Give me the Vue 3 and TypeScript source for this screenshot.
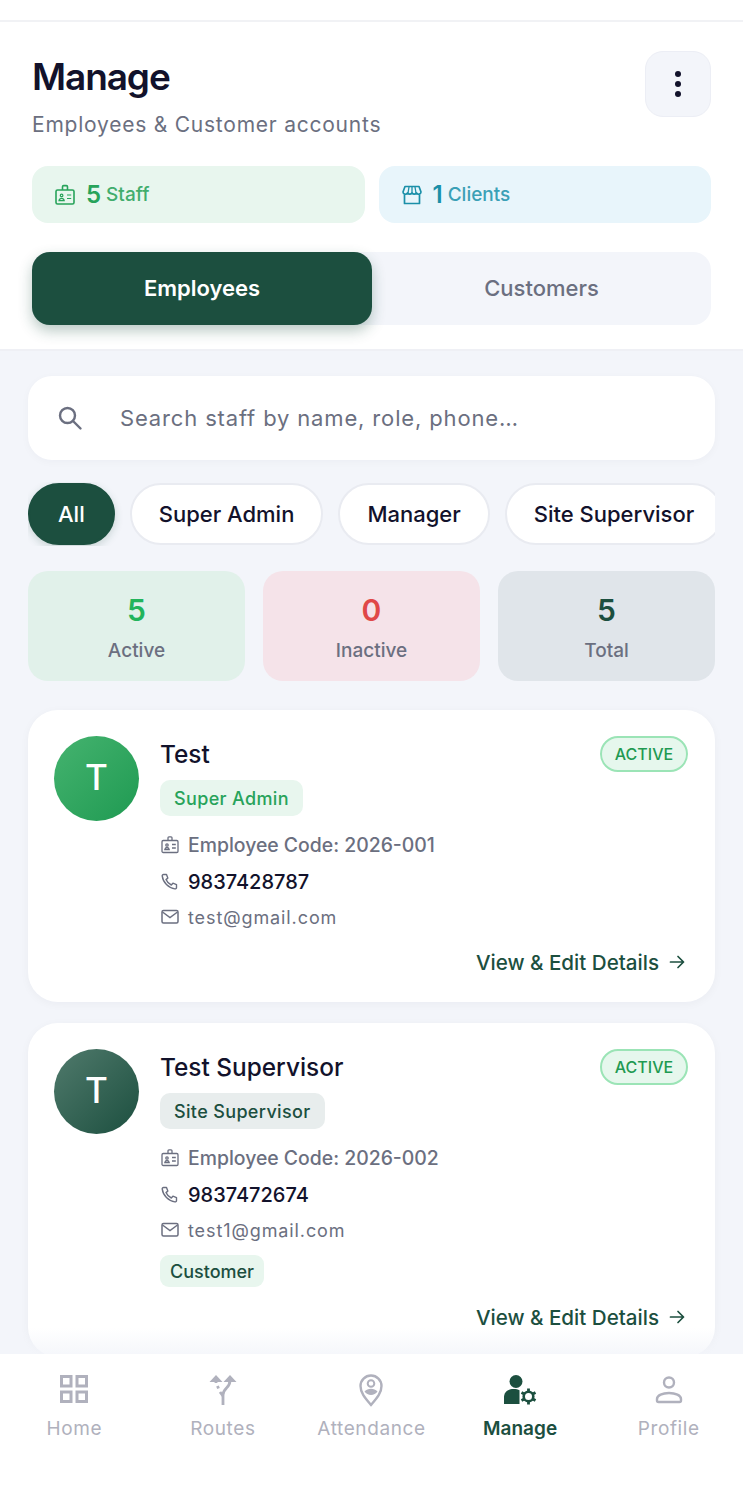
<script setup lang="ts">
type Employee = {
  name: string;
  role: string;
  code: string;
  phone: string;
  email: string;
  tone: string;
  customer?: boolean;
};

const filters = ["All", "Super Admin", "Manager", "Site Supervisor"];

const stats = [
  { label: "Active", value: 5, tone: "green" },
  { label: "Inactive", value: 0, tone: "red" },
  { label: "Total", value: 5, tone: "dark" },
];

const employees: Employee[] = [
  {
    name: "Test",
    role: "Super Admin",
    code: "2026-001",
    phone: "9837428787",
    email: "test@gmail.com",
    tone: "green",
  },
  {
    name: "Test Supervisor",
    role: "Site Supervisor",
    code: "2026-002",
    phone: "9837472674",
    email: "test1@gmail.com",
    tone: "dark",
    customer: true,
  },
];

const navItems = ["Home", "Routes", "Attendance", "Manage", "Profile"];
</script>

<template>
  <div class="screen">
    <div class="status-bar"></div>

    <header class="header">
      <div class="title-row">
        <div>
          <h1>Manage</h1>
          <p class="subtitle">Employees &amp; Customer accounts</p>
        </div>
        <button class="more-btn" aria-label="More">
          <span></span><span></span><span></span>
        </button>
      </div>

      <div class="counts">
        <div class="count count--staff">
          <svg width="22" height="22" viewBox="0 0 22 22" fill="none" stroke="currentColor" stroke-width="1.6">
            <rect x="2" y="6" width="18" height="14" rx="1.5" />
            <path d="M8.5 6V2.8a1.2 1.2 0 0 1 1.2-1.2h2.6a1.2 1.2 0 0 1 1.2 1.2V6" />
            <circle cx="7.6" cy="11.4" r="1.3" stroke-width="1.2" />
            <path d="M5 16.6c.3-1.6 1.3-2.3 2.6-2.3s2.3.7 2.6 2.3zM13 11h4.2M13 14.5h4.2" stroke-width="1.2" />
          </svg>
          <b>5</b><span>Staff</span>
        </div>
        <div class="count count--clients">
          <svg width="22" height="22" viewBox="0 0 22 22" fill="none" stroke="currentColor" stroke-width="1.7" stroke-linejoin="round">
            <path d="M4 2.5h14l2 5.5a2.4 2.4 0 0 1-4.5 1 2.7 2.7 0 0 1-4.5 0 2.7 2.7 0 0 1-4.5 0A2.4 2.4 0 0 1 2 8z" />
            <path d="M8 3l-1 6M14 3l1 6M11 3v6" stroke-width="1.3" />
            <path d="M3.5 10.5v9h15v-9" />
          </svg>
          <b>1</b><span>Clients</span>
        </div>
      </div>

      <div class="tabs">
        <div class="tab tab--active">Employees</div>
        <div class="tab">Customers</div>
      </div>
    </header>

    <main class="content">
      <div class="search">
        <svg width="28" height="28" viewBox="0 0 28 28" fill="none" stroke="#6b6f80" stroke-width="2.4" stroke-linecap="round">
          <circle cx="11.5" cy="11.5" r="7.5" />
          <path d="M17 17l7.5 7.5" />
        </svg>
        <span>Search staff by name, role, phone…</span>
      </div>

      <div class="filters">
        <div
          v-for="(filter, i) in filters"
          :key="filter"
          class="filter"
          :class="{ 'filter--active': i === 0 }"
        >
          {{ filter }}
        </div>
      </div>

      <div class="stats">
        <div v-for="stat in stats" :key="stat.label" class="stat" :class="`stat--${stat.tone}`">
          <b>{{ stat.value }}</b>
          <span>{{ stat.label }}</span>
        </div>
      </div>

      <article v-for="emp in employees" :key="emp.code" class="card">
        <div class="avatar" :class="`avatar--${emp.tone}`">T</div>
        <div class="card__body">
          <div class="card__top">
            <h2>{{ emp.name }}</h2>
            <span class="active-pill">ACTIVE</span>
          </div>
          <span class="role" :class="`role--${emp.tone}`">{{ emp.role }}</span>

          <div class="line line--code">
            <svg width="20" height="20" viewBox="0 0 20 20" fill="none" stroke="#6b6f80" stroke-width="1.3">
              <rect x="2" y="5.5" width="16" height="12" rx="1.2" />
              <path d="M8 5.5V2.8a1 1 0 0 1 1-1h2a1 1 0 0 1 1 1v2.7" />
              <circle cx="7" cy="10" r="1.2" />
              <path d="M4.8 14.5c.2-1.400 1.100-2 2.200-2s2 .6 2.200 2zM12 9.500h3.800M12 13h3.800" />
            </svg>
            <span>Employee Code: {{ emp.code }}</span>
          </div>
          <div class="line line--phone">
            <svg width="20" height="20" viewBox="0 0 20 20" fill="none" stroke="#6b6f80" stroke-width="1.4" stroke-linejoin="round">
              <path d="M3.5 2.5h3l1.3 3.6-1.800 1.500c.9 2.300 2.800 4.200 5.300 5.400l1.600-1.800 3.600 1.400v2.800c0 .9-.7 1.600-1.600 1.500C8.500 16 3 10.500 2.200 3.900c-.1-.8.5-1.400 1.300-1.400z" />
            </svg>
            <span>{{ emp.phone }}</span>
          </div>
          <div class="line line--mail">
            <svg width="20" height="20" viewBox="0 0 20 20" fill="none" stroke="#6b6f80" stroke-width="1.5">
              <rect x="2" y="3.5" width="16" height="12.5" rx="1.5" />
              <path d="M2.5 5l7.5 5.5L17.5 5" />
            </svg>
            <span>{{ emp.email }}</span>
          </div>

          <span v-if="emp.customer" class="customer-tag">Customer</span>

          <div class="details">
            <span>View &amp; Edit Details</span>
            <svg width="20" height="20" viewBox="0 0 20 20" fill="none" stroke="#1c4f3f" stroke-width="1.7" stroke-linecap="round" stroke-linejoin="round">
              <path d="M3.5 10h13M11 4.5l5.5 5.5-5.5 5.5" />
            </svg>
          </div>
        </div>
      </article>
      <div class="fade"></div>
    </main>

    <nav class="nav">
      <div v-for="(item, i) in navItems" :key="item" class="nav__item" :class="{ 'nav__item--active': i === 3 }">
        <svg v-if="i === 0" width="34" height="34" viewBox="0 0 34 34" fill="none" stroke="#b0b1bd" stroke-width="3">
          <rect x="4.5" y="3.5" width="9.5" height="9.5" />
          <rect x="20" y="3.5" width="9.5" height="9.5" />
          <rect x="4.5" y="19" width="9.5" height="9.5" />
          <rect x="20" y="19" width="9.5" height="9.5" />
        </svg>
        <svg v-else-if="i === 1" width="34" height="34" viewBox="0 0 34 34" fill="none" stroke="#b0b1bd" stroke-width="2.8">
          <path d="M17 32V22c0-3 1.500-5 3.500-7 2.200-2 3.500-4 3.500-8" />
          <path d="M17 23l-3-4" />
          <path d="M12.500 15.500l-1-2.500M10 10V7" stroke-dasharray="3 2" />
          <path d="M3.500 9l6.500-7 6.500 7zM17.500 9l6.500-7 6.500 7z" fill="#b0b1bd" stroke="none" />
        </svg>
        <svg v-else-if="i === 2" width="34" height="34" viewBox="0 0 34 34" fill="none" stroke="#b0b1bd" stroke-width="2.4">
          <path d="M17 32C11 25 6.500 20 6.500 13a10.500 10.500 0 0 1 21 0C27.500 20 23 25 17 32z" />
          <circle cx="17" cy="10.500" r="3.300" fill="none" stroke-width="2" />
          <path d="M10.500 18.500c1.800-2 4-2.800 6.500-2.800s4.700.8 6.500 2.800C22 20.500 19.500 22 17 22s-5-1.500-6.500-3.500z" fill="#b0b1bd" stroke="none" />
        </svg>
        <svg v-else-if="i === 3" width="34" height="34" viewBox="0 0 34 34" fill="#1c4f3f">
          <circle cx="13" cy="8.500" r="6.500" />
          <path d="M1 31v-7c0-5 4-8 9.500-8 2.500 0 4.500.4 6 1.200V31z" />
          <g fill="none" stroke="#1c4f3f">
            <circle cx="25.500" cy="23.500" r="4.800" stroke-width="2.600" />
            <path d="M25.500 15.500v3M25.500 28.500v3M18.500 19.500l2.700 1.500M29.800 26l2.700 1.500M18.500 27.500l2.700-1.500M29.800 21l2.700-1.500" stroke-width="2.800" />
          </g>
        </svg>
        <svg v-else width="34" height="34" viewBox="0 0 34 34" fill="none" stroke="#b0b1bd" stroke-width="2.4">
          <circle cx="17" cy="9.500" r="5" />
          <path d="M5 27.500v-1.500c0-3.500 5.500-6 12-6s12 2.500 12 6v1.500a1.500 1.500 0 0 1-1.500 1.500h-21A1.500 1.500 0 0 1 5 27.500z" />
        </svg>
        <span>{{ item }}</span>
      </div>
    </nav>
  </div>
</template>

<style>
html,
body {
  margin: 0;
  background: #fff;
}
</style>

<style scoped>
.screen {
  width: 743px;
  height: 1486px;
  display: flex;
  flex-direction: column;
  overflow: hidden;
  font-family: Inter, "Noto Sans", sans-serif;
  color: #12122b;
  background: #f3f5fa;
}
.status-bar {
  height: 20px;
  flex-shrink: 0;
  background: #fff;
  border-bottom: 2px solid #f1f2f5;
}
.header {
  flex-shrink: 0;
  height: 329px;
  box-sizing: border-box;
  padding: 29px 32px 0;
  background: #fff;
  border-bottom: 2px solid #eff0f5;
}
.title-row {
  display: flex;
  justify-content: space-between;
  height: 115px;
}
h1 {
  margin: 0;
  padding-top: 3px;
  font-size: 37px;
  line-height: 46px;
  font-weight: 600;
  letter-spacing: -1.1px;
  color: #12122b;
}
.subtitle {
  margin: 12px 0 0;
  font-size: 21px;
  line-height: 26px;
  letter-spacing: 0.77px;
  color: #6b6f80;
}
.more-btn {
  width: 66px;
  height: 66px;
  padding: 0;
  border: 1px solid #eceef5;
  border-radius: 18px;
  background: #f3f5fa;
  display: flex;
  flex-direction: column;
  align-items: center;
  justify-content: center;
  gap: 4px;
}
.more-btn span {
  width: 6px;
  height: 6px;
  border-radius: 50%;
  background: #12122b;
}
.counts {
  display: flex;
  gap: 14px;
}
.count {
  flex: 1;
  height: 57px;
  box-sizing: border-box;
  padding-left: 22px;
  border-radius: 16px;
  display: flex;
  align-items: center;
  font-size: 19px;
  font-weight: 500;
}
.count svg {
  margin-right: 10px;
}
.count b {
  font-size: 24px;
  font-weight: 600;
  margin-right: 5px;
}
.count--staff {
  background: #e8f6ee;
  color: #27a35a;
}
.count--staff span {
  color: #42ad6d;
}
.count--clients {
  background: #e8f5fb;
  color: #1a8fa8;
}
.count--clients span {
  color: #3aa0b6;
}
.tabs {
  margin-top: 29px;
  height: 73px;
  display: flex;
  border-radius: 18px;
  background: #f3f5fa;
}
.tab {
  flex: 1;
  display: flex;
  align-items: center;
  justify-content: center;
  padding-bottom: 2px;
  box-sizing: border-box;
  font-size: 22px;
  font-weight: 500;
  color: #6b6f80;
}
.tab--active {
  flex: none;
  width: 340px;
  border-radius: 18px;
  background: #1c4f3f;
  color: #fff;
  font-weight: 600;
  box-shadow: 0 6px 14px rgba(28, 79, 63, 0.3);
}
.content {
  position: relative;
  flex: 1;
  min-height: 0;
  overflow: hidden;
  padding: 25px 28px 0;
}
.search {
  height: 84px;
  box-sizing: border-box;
  padding: 0 28px;
  border-radius: 24px;
  background: #fff;
  box-shadow: 0 2px 8px rgba(20, 30, 60, 0.03);
  display: flex;
  align-items: center;
  gap: 36px;
  font-size: 22px;
  letter-spacing: 0.85px;
  color: #6b6f80;
}
.filters {
  margin-top: 22px;
  height: 64px;
  display: flex;
  align-items: center;
  gap: 15px;
  overflow: hidden;
}
.filter {
  flex-shrink: 0;
  height: 62px;
  box-sizing: border-box;
  padding: 0 27px;
  border: 2px solid #e9ebf1;
  border-radius: 31px;
  background: #fff;
  display: flex;
  align-items: center;
  font-size: 22px;
  font-weight: 500;
  color: #12122b;
}
.filter--active {
  padding: 0 28px;
  border-color: #1c4f3f;
  background: #1c4f3f;
  color: #fff;
  box-shadow: 0 3px 8px rgba(28, 79, 63, 0.2);
}
.stats {
  margin-top: 25px;
  display: grid;
  grid-template-columns: repeat(3, 1fr);
  gap: 18px;
}
.stat {
  height: 110px;
  border-radius: 20px;
  display: flex;
  flex-direction: column;
  align-items: center;
  padding-top: 21px;
  box-sizing: border-box;
}
.stat b {
  font-size: 30px;
  line-height: 36px;
  font-weight: 600;
}
.stat span {
  margin-top: 11px;
  font-size: 19px;
  line-height: 24px;
  font-weight: 500;
  color: #6b6f80;
}
.stat--green {
  background: #e1f1ea;
}
.stat--green b {
  color: #22b45c;
}
.stat--red {
  background: #f5e3e9;
}
.stat--red b {
  color: #e04848;
}
.stat--dark {
  background: #e0e5ea;
}
.stat--dark b {
  color: #1c4f3f;
}
.card {
  margin-top: 29px;
  padding: 26px 27px 25px 26px;
  border-radius: 30px;
  background: #fff;
  box-shadow: 0 2px 10px rgba(20, 30, 60, 0.04);
  display: flex;
  gap: 21px;
}
.card + .card {
  margin-top: 21px;
}
.avatar {
  flex-shrink: 0;
  width: 85px;
  height: 85px;
  box-sizing: border-box;
  padding-bottom: 4px;
  border-radius: 50%;
  display: flex;
  align-items: center;
  justify-content: center;
  color: #fff;
  font-size: 35px;
  font-weight: 500;
}
.avatar--green {
  background: linear-gradient(135deg, #45b36f, #1f9a52);
}
.avatar--dark {
  background: linear-gradient(135deg, #507a6c, #1c4f3f);
}
.card__body {
  flex: 1;
  min-width: 0;
}
.card__top {
  display: flex;
  justify-content: space-between;
  align-items: flex-start;
  height: 36px;
}
h2 {
  margin: 0;
  padding-top: 3px;
  font-size: 24.4px;
  line-height: 30px;
  font-weight: 500;
  color: #12122b;
}
.active-pill {
  width: 88px;
  height: 36px;
  box-sizing: border-box;
  border: 2px solid #9be4b6;
  border-radius: 18px;
  background: #e6f7ed;
  display: flex;
  align-items: center;
  justify-content: center;
  font-size: 16px;
  font-weight: 500;
  color: #1f9a52;
}
.role {
  display: inline-block;
  margin-top: 8px;
  height: 36px;
  padding: 0 14px;
  border-radius: 10px;
  font-size: 18px;
  line-height: 37px;
  letter-spacing: 0.35px;
  font-weight: 500;
}
.role--green {
  background: #e8f6ee;
  color: #27a35a;
}
.role--dark {
  background: #e8eded;
  color: #1c4f3f;
}
.line {
  display: flex;
  align-items: center;
  gap: 8px;
  height: 36px;
  font-size: 20px;
  font-weight: 500;
  color: #6b6f80;
}
.role + .line {
  margin-top: 11px;
}
.line--code {
  font-size: 19.4px;
}
.line--phone {
  color: #12122b;
  padding-top: 2px;
  box-sizing: border-box;
}
.line--mail {
  font-size: 18px;
  font-weight: 400;
  letter-spacing: 0.9px;
}
.customer-tag {
  display: inline-block;
  margin-top: 7px;
  height: 32px;
  padding: 0 10px;
  border-radius: 9px;
  background: #e8f6ee;
  color: #1c4f3f;
  font-size: 18px;
  line-height: 33px;
  font-weight: 500;
}
.details {
  margin-top: 12px;
  padding-right: 1px;
  display: flex;
  justify-content: flex-end;
  align-items: center;
  gap: 8px;
  height: 30px;
  font-size: 20.6px;
  font-weight: 500;
  color: #1c4f3f;
}
.customer-tag + .details {
  margin-top: 15px;
}
.fade {
  position: absolute;
  left: 0;
  right: 0;
  bottom: 0;
  height: 26px;
  background: linear-gradient(rgba(243, 245, 250, 0), rgba(243, 245, 250, 0.8));
}
.nav {
  position: relative;
  flex-shrink: 0;
  height: 132px;
  box-sizing: border-box;
  padding-top: 19px;
  background: #fff;
  display: grid;
  grid-template-columns: repeat(5, 1fr);
}
.nav__item {
  display: flex;
  flex-direction: column;
  align-items: center;
  font-size: 19px;
  font-weight: 400;
  letter-spacing: 0.6px;
  color: #b0b1bd;
}
.nav__item span {
  margin-top: 10px;
  line-height: 24px;
}
.nav__item--active {
  color: #1c4f3f;
  font-weight: 600;
  letter-spacing: 0;
}
</style>
